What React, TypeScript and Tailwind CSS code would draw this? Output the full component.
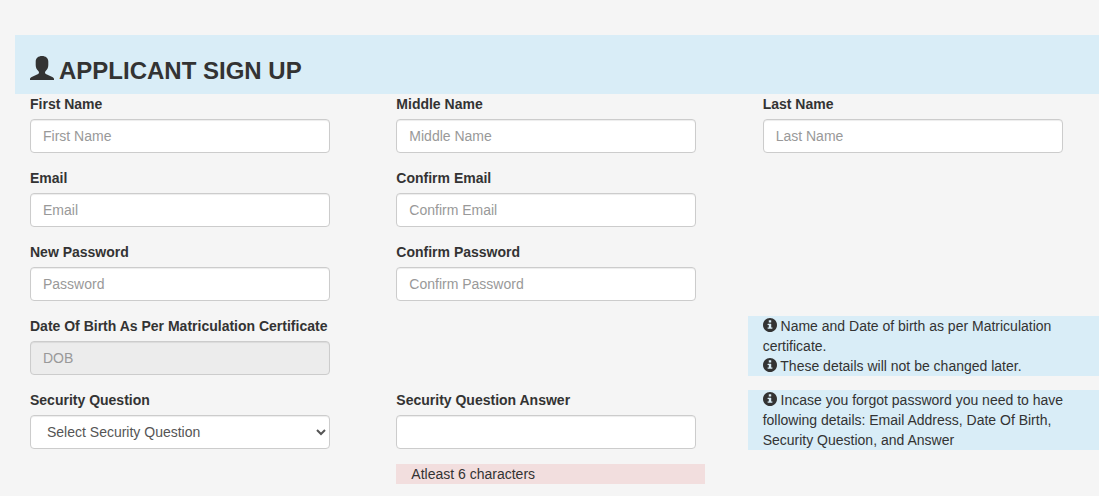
import type { ReactNode } from 'react';

const controlClass =
  'block h-[34px] w-full max-w-[300px] rounded border border-[#ccc] bg-white px-3 text-sm text-[#555] shadow-[inset_0_1px_1px_rgba(0,0,0,0.075)] placeholder:text-[#999] focus:border-[#66afe9] focus:outline-none disabled:cursor-not-allowed disabled:bg-[#ececec]';

function UserIcon() {
  return (
    <svg viewBox="0 0 24 24" className="size-6 shrink-0" fill="currentColor" aria-hidden="true">
      <path d="M12 0C8.300 0 5.700 2.100 5.700 5.500V9c0 2.600 1 4.600 2.600 6 .5.5.7.9.7 1.500 0 .9-.5 1.400-1.400 1.800L1.700 21C.5 21.600 0 22.200 0 23v1h24v-1c0-.8-.5-1.400-1.700-2l-5.900-2.700c-.9-.4-1.400-.9-1.400-1.800 0-.6.2-1 .7-1.500 1.600-1.400 2.600-3.400 2.600-6V5.500C18.300 2.100 15.700 0 12 0z" />
    </svg>
  );
}

function InfoIcon() {
  return (
    <svg
      viewBox="23 23 1154 1154"
      className="relative -top-0.5 inline-block size-3.5 align-middle"
      fill="currentColor"
      aria-hidden="true"
    >
      <path
        transform="matrix(1 0 0 -1 0 1200)"
        d="M600 1177q117 0 224 -45.5t184.5 -123t123 -184.5t45.5 -224t-45.5 -224t-123 -184.5t-184.5 -123t-224 -45.5t-224 45.5t-184.5 123t-123 184.5t-45.5 224t45.5 224t123 184.5t184.5 123t224 45.5zM675 1000h-150q-10 0 -17.5 -7.5t-7.5 -17.5v-150q0 -10 7.5 -17.5t17.5 -7.5h150q10 0 17.5 7.5t7.5 17.5v150q0 10 -7.5 17.5t-17.5 7.5zM675 700h-250q-10 0 -17.5 -7.5t-7.5 -17.5v-50q0 -10 7.5 -17.5t17.5 -7.5h75v-200h-75q-10 0 -17.5 -7.5t-7.5 -17.5v-50q0 -10 7.5 -17.5t17.5 -7.5h350q10 0 17.5 7.5t7.5 17.5v50q0 10 -7.5 17.5t-17.5 7.5h-75v275q0 10 -7.5 17.5t-17.5 7.5z"
      />
    </svg>
  );
}

function Field({ id, label, children }: { id: string; label: string; children: ReactNode }) {
  return (
    <div className="px-[15px] pb-px">
      <label htmlFor={id} className="mb-[5px] block font-bold">
        {label}
      </label>
      {children}
    </div>
  );
}

interface TextFieldProps {
  id: string;
  label: string;
  type?: string;
  placeholder?: string;
  disabled?: boolean;
}

function TextField({ id, label, type = 'text', placeholder, disabled }: TextFieldProps) {
  return (
    <Field id={id} label={label}>
      <input
        id={id}
        name={id}
        type={type}
        placeholder={placeholder}
        disabled={disabled}
        className={controlClass}
      />
    </Field>
  );
}

export default function App() {
  return (
    <div className="min-h-screen overflow-x-hidden bg-[#f5f5f5] pt-[35px] pl-[15px] font-['Liberation_Sans',Arial,sans-serif] text-sm leading-5 text-[#333]">
      <form className="-mr-[15px]">
        {/* Heading */}
        <div className="flex items-start gap-[5px] bg-[#d9edf7] px-[15px] pt-[21px] pb-2">
          <UserIcon />
          <h3 className="text-2xl leading-[30px] font-bold">APPLICANT SIGN UP</h3>
        </div>

        <div className="grid grid-cols-3 gap-y-3.5">
          {/* Name */}
          <TextField id="firstName" label="First Name" placeholder="First Name" />
          <TextField id="middleName" label="Middle Name" placeholder="Middle Name" />
          <TextField id="lastName" label="Last Name" placeholder="Last Name" />

          {/* Email */}
          <TextField id="email" label="Email" type="email" placeholder="Email" />
          <TextField id="confirmEmail" label="Confirm Email" type="email" placeholder="Confirm Email" />

          {/* Password */}
          <div className="col-start-1">
            <TextField id="password" label="New Password" type="password" placeholder="Password" />
          </div>
          <TextField
            id="confirmPassword"
            label="Confirm Password"
            type="password"
            placeholder="Confirm Password"
          />

          {/* Date of birth */}
          <div className="col-start-1">
            <TextField id="dob" label="Date Of Birth As Per Matriculation Certificate" placeholder="DOB" disabled />
          </div>
          <div className="col-start-3 self-start bg-[#d9edf7] pr-10 pl-[15px]">
            <p>
              <InfoIcon /> Name and Date of birth as per Matriculation certificate.
            </p>
            <p>
              <InfoIcon /> These details will not be changed later.
            </p>
          </div>

          {/* Security question */}
          <Field id="securityQuestion" label="Security Question">
            <select id="securityQuestion" name="securityQuestion" className={controlClass}>
              <option>Select Security Question</option>
            </select>
          </Field>
          <div>
            <TextField id="securityAnswer" label="Security Question Answer" />
            <div className="mt-3.5 px-[15px]">
              <p className="w-11/12 bg-[#f2dede] px-[15px]">Atleast 6 characters</p>
            </div>
          </div>
          <div className="self-start bg-[#d9edf7] pr-10 pl-[15px]">
            <p>
              <InfoIcon /> Incase you forgot password you need to have following details: Email
              Address, Date Of Birth, Security Question, and Answer
            </p>
          </div>
        </div>
      </form>
    </div>
  );
}
